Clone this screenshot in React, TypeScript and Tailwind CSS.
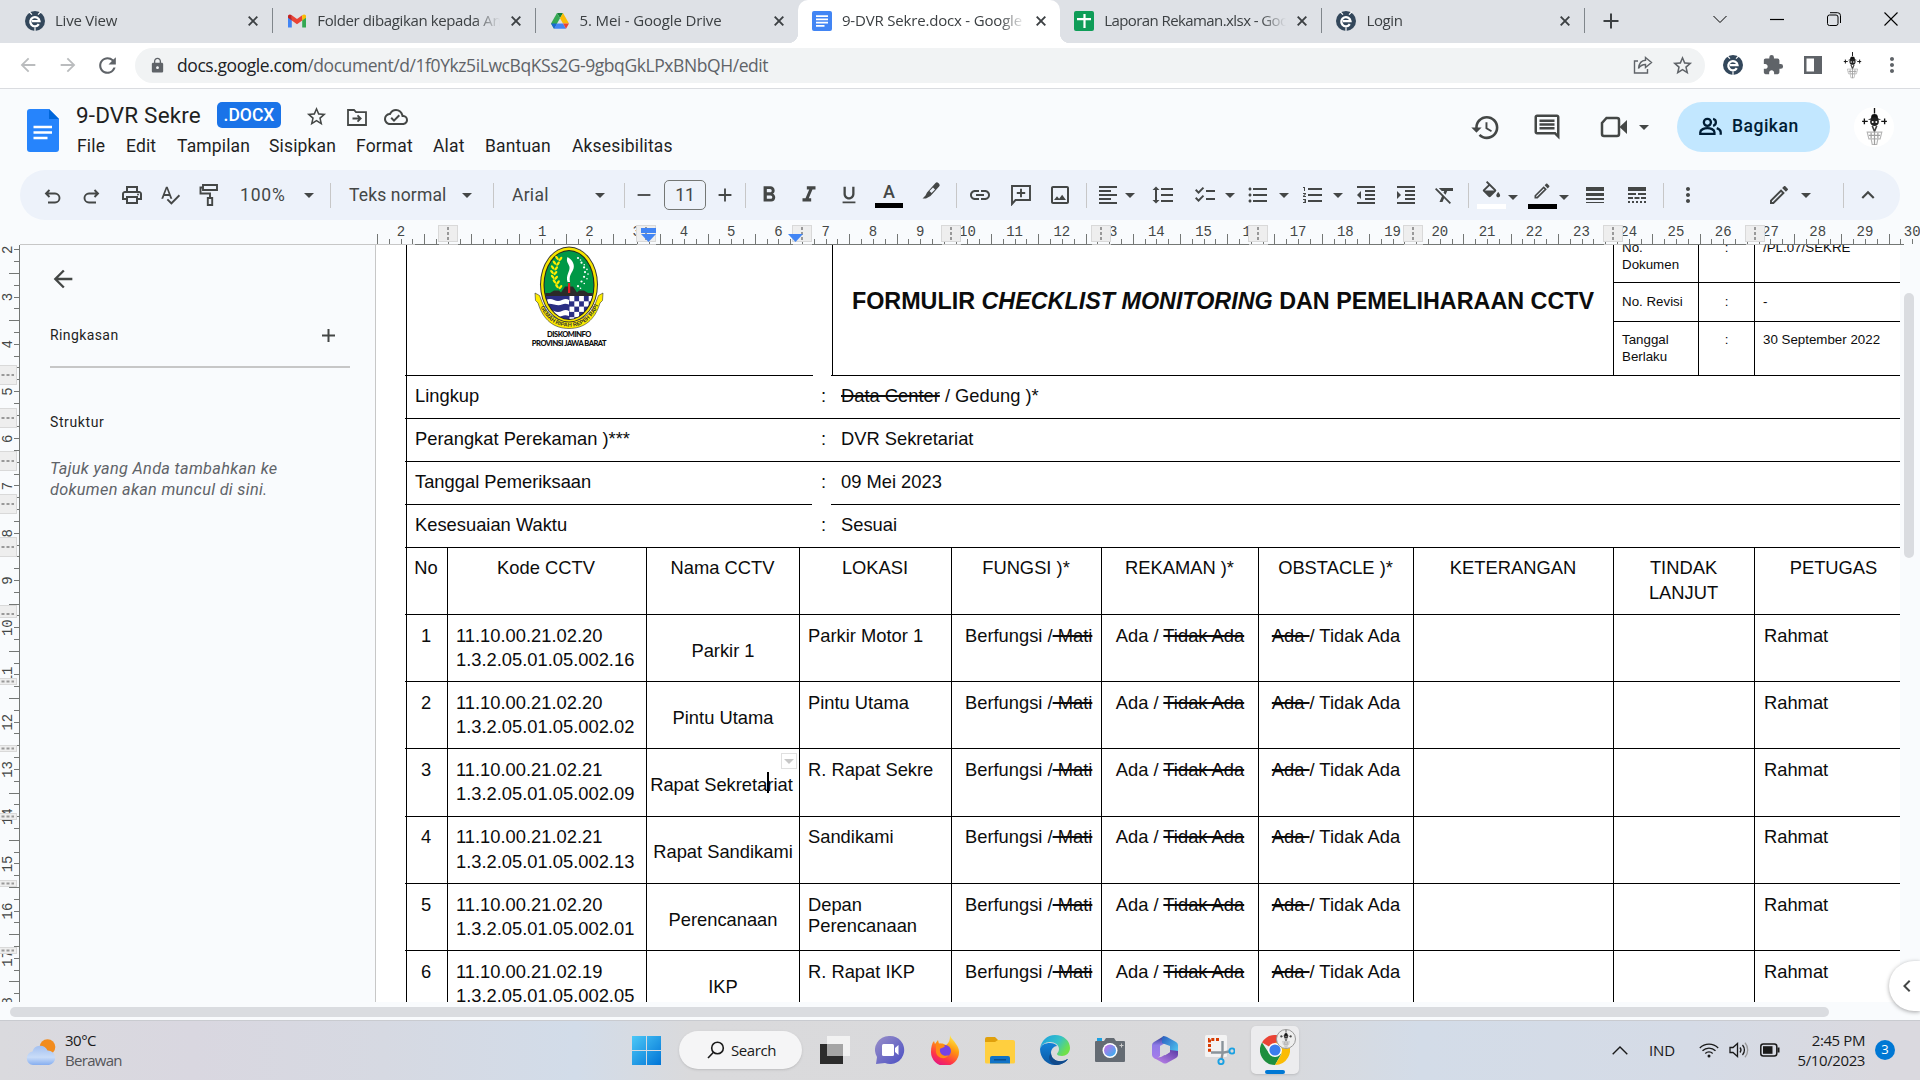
import React from "react";
import type { ReactNode } from "react";
import {
  MdOutlinePrint, MdSpellcheck, MdFormatBold, MdFormatItalic, MdFormatUnderlined,
  MdLink, MdOutlineImage, MdFormatAlignLeft, MdFormatLineSpacing, MdChecklist, MdFormatListBulleted,
  MdFormatListNumbered, MdFormatIndentDecrease, MdFormatIndentIncrease, MdFormatClear, MdFormatColorFill,
  MdLineWeight, MdLineStyle, MdMoreVert, MdOutlineEdit, MdExpandLess, MdHistory, MdOutlineComment,
  MdStarBorder, MdOutlineCloudDone, MdExtension, MdLock, MdArrowBack, MdArrowForward, MdRefresh, MdAdd,
  MdRemove, MdChevronLeft, MdPeopleOutline,
} from "react-icons/md";

/* ---------- small shared drawings ---------- */

function EyeLogo({ className = "" }: { className?: string }) {
  return (
    <svg viewBox="0 0 20 20" className={`h-5 w-5 shrink-0 ${className}`}>
      <circle cx="10" cy="10" r="10" fill="#33475b" />
      <path d="M4 .6L7 3.600M16 .6L13 3.600M10 20v-3.500" stroke="#fff" strokeWidth="1.200" />
      <path d="M13.800 13.200A4.600 4.600 0 1 1 14.500 10.200H7" fill="none" stroke="#fff" strokeWidth="2.300" />
    </svg>
  );
}

function GmailLogo() {
  return (
    <svg viewBox="0 0 20 20" className="h-5 w-5 shrink-0">
      <path d="M1 4.500v12h3.800V8L1 4.500z" fill="#4285f4" />
      <path d="M19 4.500v12h-3.800V8L19 4.500z" fill="#34a853" />
      <path d="M4.800 4.200v5.200L10 13.300l5.200-3.900V4.200L10 8.100z" fill="#ea4335" />
      <path d="M1 5.200v1.500l3.800 2.800V4.200C3 2.700 1 3.400 1 5.200z" fill="#c5221f" />
      <path d="M19 5.200v1.500l-3.800 2.800V4.200C17 2.700 19 3.400 19 5.200z" fill="#fbbc04" />
    </svg>
  );
}

function DriveLogo() {
  return (
    <svg viewBox="0 0 20 20" className="h-5 w-5 shrink-0">
      <path d="M7 2h6L10 7.200z" fill="#188038" />
      <path d="M7 2L1 12.500l3 5.200L10 7.200z" fill="#34a853" />
      <path d="M13 2l6 10.500h-6L10 7.200z" fill="#fbbc04" />
      <path d="M7 12.500h6l3 5.200H4z" fill="#4285f4" />
      <path d="M13 12.500h6l-3 5.200z" fill="#ea4335" />
      <path d="M7 12.500l-3 5.200-3-5.200z" fill="#1967d2" />
    </svg>
  );
}

function DocsTabLogo() {
  return (
    <svg viewBox="0 0 20 20" className="h-5 w-5 shrink-0">
      <rect width="20" height="20" rx="2" fill="#4285f4" />
      <path d="M4 5.200h12M4 8.400h12M4 11.600h12M4 14.800h8.500" stroke="#fff" strokeWidth="1.700" />
    </svg>
  );
}

function SheetsLogo() {
  return (
    <svg viewBox="0 0 20 20" className="h-5 w-5 shrink-0">
      <rect width="20" height="20" rx="2" fill="#0f9d58" />
      <path d="M3 8.200h14M10.500 3v14" stroke="#fff" strokeWidth="2.200" />
    </svg>
  );
}

function Pirate({ className = "" }: { className?: string }) {
  return (
    <svg viewBox="0 0 24 34" className={`shrink-0 ${className}`}>
      <path d="M12 0v5M1 12h5M18 12h5M3 9.500v5M21 9.500v5" stroke="#111" strokeWidth="1.200" />
      <path d="M6 10.500Q12 7 18 10.500z" fill="#111" />
      <circle cx="12" cy="8.500" r="3" fill="#111" />
      <circle cx="12" cy="12.300" r="3.900" fill="#222" />
      <circle cx="10.400" cy="12.600" r=".9" fill="#fff" />
      <circle cx="13.600" cy="12.600" r=".9" fill="#fff" />
      <path d="M10 16l2 5 2-5" stroke="#444" strokeWidth="1.400" fill="none" />
      <path d="M5.500 21.500h13l-1.500 6h-10zM9 27.500h6l-1 5h-4z" fill="none" stroke="#b5b5b5" strokeWidth="1" />
      <path d="M7 24.500h10M9 22v5M12 22v11M15 22v5" stroke="#a0a0a0" strokeWidth="1.100" />
    </svg>
  );
}

function Caret({ className = "" }: { className?: string }) {
  return (
    <span className={`flex w-3 shrink-0 justify-center ${className}`}>
      <svg viewBox="0 0 10 5" className="h-[5px] w-[10px]">
        <path d="M0 0h10L5 5z" fill="#444746" />
      </svg>
    </span>
  );
}

/* ---------- browser chrome ---------- */

type TabInfo = { icon: ReactNode; title: string; tracking: string; active?: boolean; line?: boolean };

const tabs: TabInfo[] = [
  { icon: <EyeLogo />, title: "Live View", tracking: "tracking-[-0.24px]", line: true },
  { icon: <GmailLogo />, title: "Folder dibagikan kepada An", tracking: "tracking-[-0.38px]", line: true },
  { icon: <DriveLogo />, title: "5. Mei - Google Drive", tracking: "tracking-[-0.13px]" },
  { icon: <DocsTabLogo />, title: "9-DVR Sekre.docx - Google", tracking: "tracking-[-0.18px]", active: true },
  { icon: <SheetsLogo />, title: "Laporan Rekaman.xlsx - Goo", tracking: "tracking-[-0.58px]", line: true },
  { icon: <EyeLogo />, title: "Login", tracking: "tracking-[-0.4px]", line: true },
];

function Tab({ t }: { t: TabInfo }) {
  return (
    <div
      className={`relative flex h-full w-[262.3px] shrink-0 items-center pb-[2px] pl-[14px] ${
        t.active ? "rounded-t-[10px] bg-white" : ""
      }`}
    >
      {t.active && (
        <>
          <span className="absolute bottom-0 -left-[10px] h-[10px] w-[10px] bg-[radial-gradient(circle_at_0_0,transparent_10px,#fff_10.5px)]" />
          <span className="absolute -right-[10px] bottom-0 h-[10px] w-[10px] bg-[radial-gradient(circle_at_100%_0,transparent_10px,#fff_10.5px)]" />
        </>
      )}
      {t.icon}
      <span
        className={`ml-[10px] w-[183px] overflow-hidden whitespace-nowrap [mask-image:linear-gradient(90deg,#000_86%,transparent_100%)] ${t.tracking}`}
      >
        {t.title}
      </span>
      <svg viewBox="0 0 10 10" className="ml-[11px] h-[10px] w-[10px] shrink-0">
        <path d="M.7.7l8.6 8.6M9.3.7L.7 9.3" stroke="#3c4043" strokeWidth="1.900" />
      </svg>
      {t.line && <span className="ml-[14px] h-[25px] w-px bg-[#80868b]" />}
    </div>
  );
}

function TabStrip() {
  return (
    <div className="flex h-[43px] items-center bg-[#dee1e6] pl-[11px] font-['Open_Sans',sans-serif] text-[15px] text-[#3c4043]">
      {tabs.map((t) => (
        <Tab key={t.title} t={t} />
      ))}
      <svg viewBox="0 0 16 16" className="mb-px ml-[18px] h-4 w-4">
        <path d="M8 .5v15M.5 8h15" stroke="#3c4043" strokeWidth="2" />
      </svg>
      <div className="ml-auto flex items-center gap-[43px] pr-[22px] pb-[6px] text-black">
        <svg viewBox="0 0 14 14" className="h-[14px] w-[14px]"><path d="M.5 4L7 10.500 13.500 4" fill="none" stroke="currentColor" /></svg>
        <svg viewBox="0 0 14 14" className="h-[14px] w-[14px]"><path d="M0 7.500h14" stroke="currentColor" strokeWidth="1.200" /></svg>
        <svg viewBox="0 0 14 14" className="h-[14px] w-[14px]" fill="none" stroke="currentColor"><rect x=".5" y="3" width="10.500" height="10.500" rx="2" /><path d="M3 .7h7.500a3 3 0 0 1 3 3V11" /></svg>
        <svg viewBox="0 0 14 14" className="h-[14px] w-[14px]"><path d="M.5.5l13 13M13.500.5l-13 13" stroke="currentColor" strokeWidth="1.100" /></svg>
      </div>
    </div>
  );
}

function AddressRow() {
  return (
    <div className="flex h-[46px] items-center border-b border-[#dadce0] bg-white pb-px pl-[17px]">
      <MdArrowBack className="h-[22px] w-[22px] text-[#babcbe]" />
      <MdArrowForward className="ml-[18px] h-[22px] w-[22px] text-[#babcbe]" />
      <MdRefresh className="ml-[16px] h-[25px] w-[25px] text-[#5f6368]" />
      <div className="ml-[15px] flex h-[35px] w-[1570px] shrink-0 items-center rounded-full bg-[#f1f3f4] pr-[11px] pl-[14px]">
        <MdLock className="h-[17px] w-[17px] text-[#5f6368]" />
        <span className="ml-[11px] font-['Open_Sans',sans-serif] text-[17.5px] tracking-[-0.42px] text-[#5f6368]">
          <span className="text-[#202124]">docs.google.com</span>/document/d/1f0Ykz5iLwcBqKSs2G-9gbqGkLPxBNbQH/edit
        </span>
        <svg viewBox="0 0 20 20" className="ml-auto h-5 w-5" fill="none" stroke="#5f6368" strokeWidth="1.400">
          <path d="M5 6H1.500v12h13v-4" />
          <path d="M12.500 2.500l6 5-6 5V9.500C9 9.500 7 11 5.500 13.500 6 9 8.500 5.500 12.500 5.300z" />
        </svg>
        <MdStarBorder className="ml-[18px] h-[23px] w-[23px] text-[#5f6368]" />
      </div>
      <EyeLogo className="ml-[18px]" />
      <MdExtension className="ml-[19px] h-[22px] w-[22px] text-[#5f6368]" />
      <svg viewBox="0 0 18 18" className="ml-[20px] h-[18px] w-[18px]"><path d="M0 0h18v18H0zM2.500 2.500v13h7.500v-13z" fill="#5f6368" fillRule="evenodd" /></svg>
      <Pirate className="ml-[21px] h-[27px] w-[19px]" />
      <MdMoreVert className="ml-[18px] h-[24px] w-[24px] text-[#5f6368]" />
    </div>
  );
}

/* ---------- document header ---------- */

const menus: [string, string][] = [
  ["File", "w-[49px]"],
  ["Edit", "w-[51px]"],
  ["Tampilan", "w-[92px]"],
  ["Sisipkan", "w-[87px]"],
  ["Format", "w-[77px]"],
  ["Alat", "w-[52px]"],
  ["Bantuan", "w-[87px]"],
  ["Aksesibilitas", "w-[110px]"],
];

function DocHeader() {
  return (
    <div className="flex h-[81px] text-[#1f1f1f]">
      <svg viewBox="0 0 32 43" className="mt-5 ml-[27px] h-[43px] w-8 shrink-0">
        <path d="M3 0h19l10 10v30a3 3 0 0 1-3 3H3a3 3 0 0 1-3-3V3a3 3 0 0 1 3-3z" fill="#2684fc" />
        <path d="M22 0l10 10H22z" fill="#0066da" />
        <path d="M6.500 18h18.500M6.500 23.500h18.500M6.500 29h14" stroke="#fff" strokeWidth="2.300" />
      </svg>
      <div className="ml-[18px] pt-[12px]">
        <div className="flex h-[28px] items-center">
          <span className="w-[140px] pt-[2px] -ml-px mr-px text-[22.5px] tracking-[0.16px]">9-DVR Sekre</span>
          <span className="flex h-[26px] w-[64px] items-center justify-center rounded-[5px] bg-[#1a73e8] text-[17.5px] font-medium text-white">
            .DOCX
          </span>
          <MdStarBorder className="mt-[3px] ml-[24px] h-[23px] w-[23px] text-[#444746]" />
          <svg viewBox="0 0 20 17" className="mt-[4px] ml-[19px] h-[17px] w-5" fill="none" stroke="#444746" strokeWidth="1.800">
            <path d="M1 1h6l2 2.200h10V16H1z" />
            <path d="M5.500 9.500h8M10.500 6.300l3.200 3.200-3.200 3.200" />
          </svg>
          <MdOutlineCloudDone className="mt-[4px] ml-[17px] h-[24px] w-[24px] text-[#444746]" />
        </div>
        <div className="flex pt-[5px] text-[17.5px] leading-[24px] tracking-[0.15px]">
          {menus.map(([m, w]) => (
            <span key={m} className={w}>{m}</span>
          ))}
        </div>
      </div>
      <div className="ml-auto flex h-[76px] items-center pr-[26px] text-[#444746]">
        <MdHistory className="h-[31px] w-[31px]" />
        <MdOutlineComment className="ml-[31px] h-[30px] w-[30px]" />
        <svg viewBox="0 0 28 22" className="ml-[38px] h-[22px] w-7">
          <path d="M6.500 2H17a2 2 0 0 1 2 2v14a2 2 0 0 1-2 2H4a2 2 0 0 1-2-2V7z" fill="none" stroke="#444746" strokeWidth="2.500" />
          <path d="M19.500 11L27 4v14z" fill="#444746" />
        </svg>
        <Caret className="ml-[10px]" />
        <div className="ml-[27px] flex h-[50px] w-[153px] items-center rounded-full bg-[#c2e7ff] pb-px pl-[21px] text-[17.5px] tracking-[0.5px] text-[#001d35]">
          <svg viewBox="0 0 24 24" className="h-[25px] w-[25px]" fill="none" stroke="currentColor" strokeWidth="2.200">
            <circle cx="9" cy="8" r="3.400" />
            <path d="M2.200 19v-1.500c0-2.600 4-4 6.800-4s6.800 1.400 6.800 4V19z" />
            <path d="M14.500 4.600a3.500 3.500 0 0 1 0 6.800M18 13.500c2.200.8 3.800 2.200 3.800 4V20" />
          </svg>
          <span className="ml-[9px] font-medium">Bagikan</span>
        </div>
        <span className="ml-[24px] flex h-10 w-10 items-center justify-center rounded-full bg-white">
          <Pirate className="h-[40px] w-[27px]" />
        </span>
      </div>
    </div>
  );
}

function Rule({ className }: { className: string }) {
  return <span className={`h-[25px] w-px shrink-0 bg-[#c7c7c7] ${className}`} />;
}

function Toolbar() {
  const ic = "h-[22px] w-[22px] shrink-0";
  return (
    <div className="mx-5 flex h-[50px] w-[1880px] items-center rounded-full bg-[#edf2fa] text-[17.5px] text-[#444746]">
      <svg viewBox="0 0 22 22" className={`mt-[3px] ml-[22px] ${ic}`} fill="none" stroke="currentColor" strokeWidth="1.900"><path d="M7.500 4L4 7.500 7.500 11M4.500 7.500H13a4.500 4.500 0 0 1 0 9H6" /></svg>
      <svg viewBox="0 0 22 22" className={`mt-[3px] ml-[16px] ${ic}`} fill="none" stroke="currentColor" strokeWidth="1.900"><path d="M14.500 4L18 7.500 14.500 11M17.500 7.500H9a4.500 4.500 0 0 0 0 9h7" /></svg>
      <MdOutlinePrint className="ml-[18px] h-6 w-6 shrink-0" />
      <MdSpellcheck className={`ml-[15px] ${ic}`} />
      <svg viewBox="0 0 22 22" className={`ml-[17px] ${ic}`} fill="none" stroke="currentColor" strokeWidth="1.900">
        <path d="M5 1h14v5H5zM5 3.500H2.500V9.500H12v4" />
        <path d="M9.800 14h4.400v7H9.800z" />
      </svg>
      <span className="ml-[20px] w-[47px] shrink-0 tracking-[0.8px]">100%</span>
      <Caret className="ml-[16px]" />
      <Rule className="ml-[15px]" />
      <span className="ml-[18px] w-[98px] shrink-0 whitespace-nowrap tracking-[0.15px]">Teks normal</span>
      <Caret className="ml-[14px]" />
      <Rule className="ml-[20px]" />
      <span className="ml-[18px] w-[40px] shrink-0 tracking-[0.26px]">Arial</span>
      <Caret className="ml-[42px]" />
      <Rule className="ml-[18px]" />
      <MdRemove className={`ml-[8px] ${ic}`} />
      <span className="ml-[9px] flex h-[30px] w-[42px] shrink-0 items-center justify-center rounded-[5px] border border-[#747775]">11</span>
      <MdAdd className={`ml-[8px] ${ic}`} />
      <Rule className="ml-[9px]" />
      <MdFormatBold className="ml-[10px] h-[26px] w-[26px] shrink-0" />
      <MdFormatItalic className="ml-[14px] h-[26px] w-[26px] shrink-0" />
      <MdFormatUnderlined className={`ml-[16px] ${ic}`} />
      <span className="ml-[15px] flex w-[28px] shrink-0 flex-col items-center">
        <span className="h-[20px] text-[18px] leading-[20px] font-medium">A</span>
        <span className="mt-[1px] h-[5px] w-[28px] bg-black" />
      </span>
      <svg viewBox="0 0 22 22" className={`mb-[8px] ml-[17px] ${ic}`}>
        <path d="M7 12.500L15.500 3a2 2 0 0 1 2.800 0l.8.8a2 2 0 0 1 0 2.800L10.500 16 6 18.500H2.500l3-3z" fill="currentColor" />
        <path d="M9.500 11l2 2 3.500-3.500-2-2z" fill="#edf2fa" />
      </svg>
      <Rule className="ml-[14px]" />
      <MdLink className="ml-[11px] h-6 w-6 shrink-0" />
      <svg viewBox="0 0 22 22" className={`ml-[18px] ${ic}`} fill="none" stroke="currentColor" strokeWidth="1.900">
        <path d="M2 20V2h18v14H5.500z" />
        <path d="M11 4.800v8.400M6.800 9h8.400" />
      </svg>
      <MdOutlineImage className="ml-[16px] h-6 w-6 shrink-0" />
      <Rule className="ml-[14px]" />
      <MdFormatAlignLeft className="ml-[9px] h-6 w-6 shrink-0" />
      <Caret className="ml-[4px]" />
      <MdFormatLineSpacing className="ml-[15px] h-6 w-6 shrink-0" />
      <MdChecklist className="ml-[18px] h-6 w-6 shrink-0" />
      <Caret className="ml-[7px]" />
      <MdFormatListBulleted className="ml-[10px] h-6 w-6 shrink-0" />
      <Caret className="ml-[8px]" />
      <MdFormatListNumbered className="ml-[11px] h-6 w-6 shrink-0" />
      <Caret className="ml-[7px]" />
      <MdFormatIndentDecrease className="ml-[10px] h-6 w-6 shrink-0" />
      <MdFormatIndentIncrease className="ml-[16px] h-6 w-6 shrink-0" />
      <MdFormatClear className="ml-[15px] h-6 w-6 shrink-0" />
      <Rule className="ml-[11px]" />
      <span className="ml-[7px] flex w-[30px] shrink-0 flex-col items-center">
        <MdFormatColorFill className="-mt-px h-[23px] w-[23px] [clip-path:inset(0_0_15%_0)]" />
        <span className="h-[5px] w-[29px] bg-white" />
      </span>
      <Caret className="mt-1 ml-[1px]" />
      <span className="ml-[8px] flex w-[30px] shrink-0 flex-col items-center">
        <MdOutlineEdit className="mb-[3px] h-[20px] w-[20px]" />
        <span className="h-[5px] w-[29px] bg-black" />
      </span>
      <Caret className="mt-1 ml-[1px]" />
      <MdLineWeight className="ml-[13px] h-6 w-6 shrink-0" />
      <MdLineStyle className="ml-[18px] h-6 w-6 shrink-0" />
      <Rule className="ml-[14px]" />
      <MdMoreVert className="ml-[12px] h-6 w-6 shrink-0" />
      <MdOutlineEdit className="ml-[67px] h-6 w-6 shrink-0" />
      <Caret className="ml-[9px]" />
      <Rule className="ml-[31px]" />
      <MdExpandLess className="ml-[11px] h-[26px] w-[26px] shrink-0" />
    </div>
  );
}

/* ---------- rulers ---------- */

const PITCH = 47.24;

function TopRuler() {
  const ticks: ReactNode[] = [];
  for (let q = -10; q <= 121; q++) {
    const x = Math.round(495 + (q * PITCH) / 4) + 0.5;
    if (x > 1918) break;
    const half = Math.abs(q % 4) === 2;
    ticks.push(<path key={q} d={`M${x} ${half ? 14 : 19}V24`} stroke="#747775" />);
  }
  const nums = [-2];
  for (let n = 1; n <= 30; n++) nums.push(n);
  const marks = [448, 646, 802, 951, 1101, 1258, 1413, 1613, 1755];
  return (
    <svg viewBox="0 0 1920 25" className="block h-[25px] w-[1920px]">
      <path d="M20 24.500H1900" stroke="#c7c7c7" />
      <path d="M415 24.500H1904" stroke="#747775" />
      {ticks}
      {nums.map((n) => (
        <text key={n} x={495 + n * PITCH + (n === -2 ? 0.5 : 0)} y="15.500" textAnchor="middle" fontSize="14" fontFamily="Liberation Mono, monospace" fill="#444746">
          {Math.abs(n)}
        </text>
      ))}
      {marks.map((m) => (
        <g key={m}>
          <path d={`M${m - 9} 24.500h19`} stroke="#c7c7c7" />
          <rect x={m - 9.5} y="5.500" width="19" height="16" fill="#eee" stroke="#d9d9d9" />
          <path d={`M${m} 7V20`} stroke="#999" strokeWidth="2" strokeDasharray="3 2" />
        </g>
      ))}
      <path d="M641 8h15v5h-15zM641 14h15l-7.500 8z" fill="#4285f4" />
      <path d="M788 14h15l-7.500 8z" fill="#4285f4" />
    </svg>
  );
}

function SideRuler() {
  const ticks: ReactNode[] = [];
  for (let q = 8; q <= 71; q++) {
    const y = Math.round(51.5 + ((q - 12) * PITCH) / 4) + 0.5;
    if (y < 2 || y > 757) continue;
    ticks.push(<path key={q} d={`M${q % 4 === 2 ? 9 : 14} ${y}H19`} stroke="#747775" />);
  }
  const nums: number[] = [];
  for (let n = 2; n <= 18; n++) nums.push(n);
  const marks: [number, number, number][] = [
    [120, 19, 10], [163, 19, 10], [206, 19, 10], [249, 19, 10], [292, 19, 10], [360, 12, 9],
    [433, 6, 3.5], [500, 6, 3.5], [568, 6, 3.5], [635, 6, 3.5], [702, 6, 3.5],
  ];
  return (
    <svg viewBox="0 0 20 757" className="block h-[757px] w-5 shrink-0">
      <path d="M19.500 0V757" stroke="#747775" />
      {ticks}
      {nums.map((n) => (
        <text key={n} transform={`translate(12 ${52 + (n - 3) * PITCH}) rotate(-90)`} textAnchor="middle" fontSize="14" fontFamily="Liberation Mono, monospace" fill="#444746">
          {n}
        </text>
      ))}
      {marks.map(([y, h, d]) => (
        <g key={y}>
          <rect x="-.5" y={y + 0.5} width="17" height={h} fill="#eee" stroke="#d9d9d9" />
          <path d={`M1.500 ${y + d}H14`} stroke="#999" strokeWidth="2" strokeDasharray="3 2" />
        </g>
      ))}
    </svg>
  );
}

/* ---------- outline panel ---------- */

function Outline() {
  return (
    <div className="w-[355px] shrink-0 pl-[30px] text-[#1f1f1f]">
      <MdArrowBack className="mt-[20px] -ml-[1px] h-[28px] w-[28px] text-[#444746]" />
      <div className="mt-[32px] flex w-[300px] items-center justify-between pr-[15px] text-[14px] leading-[20px] tracking-[0.4px]">
        <span className="text-[#1f1f1f]">Ringkasan</span>
        <svg viewBox="0 0 13 13" className="h-[13px] w-[13px]"><path d="M6.500 0v13M0 6.500h13" stroke="#444746" strokeWidth="2" /></svg>
      </div>
      <div className="mt-[21px] h-[2px] w-[300px] bg-[#c7c7c7]" />
      <div className="mt-[44px] text-[14px] leading-[20px] tracking-[0.6px] text-[#1f1f1f]">Struktur</div>
      <div className="mt-[26px] w-[240px] text-[16.25px] leading-[21px] tracking-[0.32px] whitespace-nowrap text-[#5f6368] italic">
        Tajuk yang Anda tambahkan ke
        <br />
        dokumen akan muncul di sini.
      </div>
    </div>
  );
}

/* ---------- document ---------- */

function Crest() {
  const checks: ReactNode[] = [];
  for (let r = 0; r < 5; r++)
    for (let c = 0; c < 5; c++)
      if ((r + c) % 2 === 0) checks.push(<rect key={`${r}${c}`} x={35.5 + c * 4.8} y={50 + r * 5.3} width="4.800" height="5.300" fill="#fff" />);
  const leaves = [0, 1, 2, 3, 4, 5, 6];
  return (
    <svg viewBox="0 0 70 83" className="mt-px h-[83px] w-[70px]">
      <defs>
        <clipPath id="oval"><ellipse cx="35" cy="39" rx="24.500" ry="34" /></clipPath>
        <path id="ribbon" d="M6 60C13 74.500 22 80.600 35 80.600S57 74.500 64 60" />
      </defs>
      <path d="M1 47L5.500 49.500 8 56C13 69 22 75 35 75S57 69 62 56L64.500 49.500 69 47 68.500 54.500 66 57C61 74 50 82.500 35 82.500S9 74 4 57L1.500 54.500z" fill="#ffed00" stroke="#333" strokeWidth=".6" />
      <ellipse cx="35" cy="38.500" rx="29" ry="38" fill="#333" />
      <ellipse cx="35" cy="38.500" rx="28" ry="37" fill="#f5e400" />
      <ellipse cx="35" cy="39" rx="25.500" ry="35" fill="#222" />
      <g clipPath="url(#oval)">
        <rect x="8" y="3" width="54" height="48" fill="#009846" />
        <path d="M8 51V47h8l4-2.500h5l2 2 4-6h8l4 6 2-2h5l4 2.500h8v4z" fill="#2b2a29" />
        <rect x="8" y="50" width="54" height="28" fill="#2b2e83" />
        {checks}
        <path d="M12 54q4-2 8 0t8 0 7 0v4.500q-4-1.500-7 0t-8 0-8 0zM12 65q4-2 8 0t8 0 7 0v5q-4-1.500-7 0t-8 0-8 0z" fill="#fff" />
      </g>
      <path d="M33.500 11c5 3 8 8 5.500 13-2 4-4 6-3 12h-2.500c-2-7 2.500-10 2-15-.3-3-4-5-2-10z" fill="#fff" />
      <rect x="34" y="37" width="2.200" height="10" fill="#e31e24" />
      {leaves.map((i) => {
        const bend = Math.sin((i / 6) * Math.PI);
        const y = 12 + i * 4.7;
        return (
          <g key={i}>
            <ellipse cx={23 - bend * 5} cy={y} rx="2.500" ry="1.200" transform={`rotate(50 ${23 - bend * 5} ${y})`} fill="#ffed00" />
            <ellipse cx={26.5 - bend * 5} cy={y + 1} rx="2.500" ry="1.200" transform={`rotate(-50 ${26.5 - bend * 5} ${y + 1})`} fill="#ffed00" />
            <circle cx={44 + bend * 7} cy={y} r="1.100" fill="#fff" />
            <circle cx={46.5 + bend * 7.5} cy={y + 2} r=".8" fill="#fff" />
          </g>
        );
      })}
      <text fontSize="5.600" fontWeight="700" fontFamily="Liberation Sans, sans-serif" fill="#333">
        <textPath href="#ribbon" startOffset="1">GEMAH RIPAH REPEH RAPIH</textPath>
      </text>
    </svg>
  );
}

const infoRows: [string, ReactNode, string][] = [
  ["Lingkup", <><s className="decoration-2">Data Center</s> / Gedung )*</>, "w-[408px]"],
  ["Perangkat Perekaman )***", "DVR Sekretariat", "w-[427px]"],
  ["Tanggal Pemeriksaan", "09 Mei 2023", "w-[427px]"],
  ["Kesesuaian Waktu", "Sesuai", "w-[407px]"],
];

const camRows: [string, string, string, string, string, string][] = [
  ["1", "11.10.00.21.02.20", "1.3.2.05.01.05.002.16", "Parkir 1", "Parkir Motor 1", "h-[67px]"],
  ["2", "11.10.00.21.02.20", "1.3.2.05.01.05.002.02", "Pintu Utama", "Pintu Utama", "h-[67px]"],
  ["3", "11.10.00.21.02.21", "1.3.2.05.01.05.002.09", "Rapat Sekretariat", "R. Rapat Sekre", "h-[68px]"],
  ["4", "11.10.00.21.02.21", "1.3.2.05.01.05.002.13", "Rapat Sandikami", "Sandikami", "h-[67px]"],
  ["5", "11.10.00.21.02.20", "1.3.2.05.01.05.002.01", "Perencanaan", "Depan Perencanaan", "h-[67px]"],
  ["6", "11.10.00.21.02.19", "1.3.2.05.01.05.002.05", "IKP", "R. Rapat IKP", "h-[67px]"],
];

const cols = "ml-px grid grid-cols-[41px_199px_153px_152px_150px_157px_155px_200px_141px_145px]";
const cell = "border-l border-black";

function HeadCell({ children, className = "pr-[1px]" }: { children?: ReactNode; className?: string }) {
  return <div className={`${cell} pt-[7px] text-center leading-[25px] ${className}`}>{children}</div>;
}

function CamRow({ row }: { row: (typeof camRows)[number] }) {
  const [no, a, b, nama, lokasi, h] = row;
  const up = no === "4" ? "-mt-px" : "";
  return (
    <div className={`border-t border-black ${h}`}>
      <div className={`${cols} h-full`}>
        <div className={`${cell} pt-[9px] pr-[2px] text-center`}><div className={up}>{no}</div></div>
        <div className={`${cell} pt-[9px] pl-[8px]`}><div className={up}>{a}</div><div className={up ? "mt-px" : ""}>{b}</div></div>
        <div className={`${cell} relative pt-[24px] text-center whitespace-nowrap`}>
          {no === "3" ? (
            <>
              <span className="-ml-[3px]">Rapat Sekreta</span>
              <span className="relative"><span className="absolute -top-[2px] left-0 h-[21px] w-[1.5px] bg-black" />riat</span>
              <span className="absolute top-[4px] right-[2px] flex h-[16px] w-[16px] items-center justify-center border border-[#e0e0e0] bg-white">
                <svg viewBox="0 0 10 5" className="h-[5px] w-[10px]"><path d="M0 0h10L5 5z" fill="#c7c7c7" /></svg>
              </span>
            </>
          ) : (
            <div className={up}>{nama}</div>
          )}
        </div>
        <div className={`${cell} pt-[10px] pl-[8px] leading-[21px]`}><div className={`${up} w-[130px]`}>{lokasi}</div></div>
        <div className={`${cell} pt-[9px] pl-[13px] whitespace-nowrap`}><div className={up}>Berfungsi /<s className="decoration-2"> Mati</s></div></div>
        <div className={`${cell} pt-[9px] text-center whitespace-nowrap`}><div className={up}>Ada / <s className="decoration-2">Tidak Ada</s></div></div>
        <div className={`${cell} pt-[9px] text-center whitespace-nowrap`}><div className={up}><s className="decoration-2">Ada </s>/ Tidak Ada</div></div>
        <div className={cell} />
        <div className={cell} />
        <div className={`${cell} pt-[9px] pl-[9px]`}><div className={up}>Rahmat</div></div>
      </div>
    </div>
  );
}

function MetaRow({ label, value, className }: { label: ReactNode; value: string; className: string }) {
  return (
    <div className={`grid grid-cols-[84px_56px_1fr] text-[13.33px] leading-[17px] ${className}`}>
      <div className="pl-[8px]">{label}</div>
      <div className="border-l border-black text-center">:</div>
      <div className="border-l border-black pl-[8px] whitespace-nowrap">{value}</div>
    </div>
  );
}

function DocumentPage() {
  return (
    <div className="w-[1525px] shrink-0 overflow-hidden border-l border-[#c7c7c7] bg-white pl-[29px] font-['Liberation_Sans',Arial,sans-serif] text-[18.33px] leading-[24px] text-[#0c0c0c]">
      <div className="ml-px flex h-[130px]">
        <div className="flex w-[426px] flex-col items-center border-l border-black pr-[101px]">
          <Crest />
          <div className="mt-[2px] text-center font-['Lato',sans-serif] text-[7.5px] leading-[8.5px] font-black tracking-[-0.48px] whitespace-nowrap">
            DISKOMINFO
            <br />
            PROVINSI JAWA BARAT
          </div>
        </div>
        <div className="flex w-[781px] items-center justify-center border-l border-black pb-[18px] text-[23.33px] font-bold whitespace-nowrap">
          <span>
            FORMULIR <i>CHECKLIST MONITORING</i> DAN PEMELIHARAAN CCTV
          </span>
        </div>
        <div className="flex-1 border-l border-black">
          <div className="h-[37px] overflow-hidden">
            <MetaRow label={<>No.<br />Dokumen</>} value="/PL.07/SEKRE" className="-mt-[6px] h-[43px]" />
          </div>
          <MetaRow label="No. Revisi" value="-" className="h-[39px] border-t border-black *:pt-[10px]" />
          <MetaRow label={<>Tanggal<br />Berlaku</>} value="30 September 2022" className="h-[54px] border-t border-black *:pt-[9px]" />
        </div>
      </div>
      {infoRows.map(([label, value, w]) => (
        <div key={label} className="relative flex h-[43px] items-center">
          <span className={`absolute top-0 left-0 h-px bg-black ${w}`} />
          <span className="absolute top-0 right-0 left-[426px] h-px bg-black" />
          <div className="ml-px flex h-full w-[407px] items-center border-l border-black pb-[2px] pl-[8px]">{label}</div>
          <span className="ml-[8px] w-[20px] pb-[2px]">:</span>
          <span className="pb-[2px]">{value}</span>
        </div>
      ))}
      <div className="h-[67px] border-t border-black">
        <div className={`${cols} h-full`}>
          <HeadCell className="pr-[2px]">No</HeadCell>
          <HeadCell className="pr-[2px]">Kode CCTV</HeadCell>
          <HeadCell>Nama CCTV</HeadCell>
          <HeadCell>LOKASI</HeadCell>
          <HeadCell>FUNGSI )*</HeadCell>
          <HeadCell>REKAMAN )*</HeadCell>
          <HeadCell>OBSTACLE )*</HeadCell>
          <HeadCell>KETERANGAN</HeadCell>
          <HeadCell>TINDAK<br />LANJUT</HeadCell>
          <HeadCell className="pl-[13px]">PETUGAS</HeadCell>
        </div>
      </div>
      {camRows.map((r) => (
        <CamRow key={r[0]} row={r} />
      ))}
    </div>
  );
}

/* ---------- taskbar ---------- */

function TaskIcons() {
  const s = "h-[30px] w-[30px] shrink-0";
  return (
    <div className="flex items-center">
      <svg viewBox="0 0 29 29" className="h-[29px] w-[29px]">
        <defs><linearGradient id="win" x1="0" y1="0" x2="1" y2="1"><stop offset="0" stopColor="#4cc8f7" /><stop offset="1" stopColor="#0074d6" /></linearGradient></defs>
        <path d="M0 0h14v14H0zM15 0h14v14H15zM0 15h14v14H0zM15 15h14v14H15z" fill="url(#win)" />
      </svg>
      <div className="ml-[18px] flex h-[38px] w-[123px] items-center rounded-full bg-[#f5f5f6] pl-[28px] text-[15px] tracking-[-0.4px] text-[#1a1a1a] shadow-sm">
        <svg viewBox="0 0 18 18" className="h-[18px] w-[18px]" fill="none" stroke="#1a1a1a" strokeWidth="1.600"><circle cx="10.500" cy="7" r="5.800" /><path d="M6.500 11.200L1 17" /></svg>
        <span className="ml-[6px]">Search</span>
      </div>
      <svg viewBox="0 0 30 30" className={`ml-[18px] ${s}`}>
        <rect y="9" width="23" height="20" fill="#2c2c2c" />
        <rect x="7" y="1" width="23" height="20" fill="#f4f4f4" opacity=".9" />
        <rect x="7" y="9" width="16" height="12" fill="#a5a5a5" />
      </svg>
      <svg viewBox="0 0 30 30" className={`ml-[25px] ${s}`}>
        <defs><linearGradient id="chat" x1="0" y1="0" x2="1" y2="1"><stop offset="0" stopColor="#9a90c8" /><stop offset="1" stopColor="#4b4fc4" /></linearGradient></defs>
        <path d="M15 1a14 14 0 1 1-5 27L1 29l1-7A14 14 0 0 1 15 1z" fill="url(#chat)" />
        <rect x="7" y="9" width="12" height="12" rx="1.500" fill="#fff" />
        <path d="M20 13l3.500-3v10L20 17z" fill="#fff" />
      </svg>
      <svg viewBox="0 0 30 30" className={`ml-[25px] ${s}`}>
        <defs>
          <linearGradient id="ff" x1=".8" y1="0" x2=".3" y2="1"><stop offset="0" stopColor="#fff44f" /><stop offset=".4" stopColor="#ff980e" /><stop offset=".75" stopColor="#ff3647" /><stop offset="1" stopColor="#e31587" /></linearGradient>
        </defs>
        <path d="M20 0c1 4 4 5 6 9 2 3 3 5 3 8a14 14 0 0 1-28 0c0-5 1-9 3-11l1 3 3-4 1 4c3-1 5 0 7 1 3-2 4-5 4-10z" fill="url(#ff)" />
        <circle cx="15" cy="16" r="6" fill="#7542e5" />
        <path d="M6 9c4-1 7 0 9 2-1 2-5 2-5 3-1 6 5 8 9 6-3 5-12 4-13-3z" fill="#ff8a16" />
      </svg>
      <svg viewBox="0 0 30 30" className={`ml-[25px] ${s}`}>
        <path d="M0 4a2 2 0 0 1 2-2h8l3 3v6H0z" fill="#e0a00c" />
        <path d="M0 7h10l3-2h15a2 2 0 0 1 2 2v20a1.500 1.500 0 0 1-1.500 1.500h-27A1.500 1.500 0 0 1 0 27z" fill="#ffcf3f" />
        <path d="M5 28.500V23a2 2 0 0 1 2-2h16a2 2 0 0 1 2 2v5.500z" fill="#1173c7" />
        <path d="M9 24.800h12" stroke="#0b4a84" strokeWidth="1.300" />
      </svg>
      <svg viewBox="0 0 30 30" className={`ml-[25px] ${s}`}>
        <defs>
          <linearGradient id="ed" x1="0" y1="0" x2="1" y2=".5"><stop offset="0" stopColor="#1b9de2" /><stop offset=".6" stopColor="#35c1c8" /><stop offset="1" stopColor="#6fe04b" /></linearGradient>
          <linearGradient id="ed2" x1="0" y1="0" x2="0" y2="1"><stop offset="0" stopColor="#1481d8" /><stop offset="1" stopColor="#0c59a4" /></linearGradient>
        </defs>
        <path d="M0 14C1 6 7 0 15 0c9 0 15 6 15 13 0 5-4 8-8 8-3 0-5-1-5-2s2-2 2-5c0-4-4-7-9-7S1 10 0 14z" fill="url(#ed)" />
        <path d="M0 14c1-4 5-6 10-6 3 0 6 1 7 3-3 0-6 3-6 7 0 6 6 9 11 8 3 0 5-2 6-2-3 4-8 6-13 6C7 30 0 23 0 14z" fill="url(#ed2)" />
        <path d="M11 18c0 6 6 9 11 8 3 0 5-2 6-2-3 4-8 6-13 6-5-2-8-7-4-12z" fill="#114a8b" />
      </svg>
      <svg viewBox="0 0 30 30" className={`ml-[25px] ${s}`}>
        <defs><linearGradient id="lens" x1="0" y1="0" x2="1" y2="1"><stop offset="0" stopColor="#d06ae8" /><stop offset="1" stopColor="#2ab7f0" /></linearGradient></defs>
        <rect x="2" y="3" width="5" height="4" fill="#1ba1e2" />
        <path d="M1 6h8l2-3h8l2 3h8a1 1 0 0 1 1 1v19a1 1 0 0 1-1 1H1a1 1 0 0 1-1-1V7a1 1 0 0 1 1-1z" fill="#646b73" />
        <circle cx="15" cy="15.500" r="7.500" fill="#fff" />
        <circle cx="15" cy="15.500" r="6" fill="url(#lens)" />
        <path d="M26.500 8.500v4M24.500 10.500h4" stroke="#ccc" strokeWidth="1" />
      </svg>
      <svg viewBox="0 0 30 30" className={`ml-[25px] ${s}`}>
        <defs>
          <linearGradient id="ma" x1="0" y1="0" x2="0" y2="1"><stop offset="0" stopColor="#2b3a8c" /><stop offset=".4" stopColor="#8f7ae8" /><stop offset="1" stopColor="#a57bea" /></linearGradient>
          <linearGradient id="mb" x1="0" y1="0" x2="1" y2="1"><stop offset="0" stopColor="#2a5fc0" /><stop offset="1" stopColor="#55d0f5" /></linearGradient>
          <linearGradient id="mc" x1="0" y1="1" x2="1" y2="0"><stop offset="0" stopColor="#c58af0" /><stop offset="1" stopColor="#5a3ba5" /></linearGradient>
        </defs>
        <path d="M14 1L4 7a4 4 0 0 0-2 3v10a4 4 0 0 0 2 3l2 1 4-3V11l7-4z" fill="url(#ma)" />
        <path d="M12 2a5 5 0 0 1 5 0l9 5a4 4 0 0 1 2 3v10l-8-4v-5l-8-3z" fill="url(#mb)" />
        <path d="M4 23l9 5a4 4 0 0 0 4 0l9-5a4 4 0 0 0 2-3v-4l-8-1v2l-9 5z" fill="url(#mc)" />
        <path d="M15 10l4.500 2.600v5L15 20.200l-4.500-2.600v-5z" fill="#d9dadc" />
      </svg>
      <svg viewBox="0 0 30 30" className={`ml-[25px] ${s}`}>
        <rect width="22" height="22" rx="1.500" fill="#f3f3f3" />
        <path d="M14 4.500H4.500V17" fill="none" stroke="#d83b01" strokeWidth="3" strokeDasharray="3 1.700" />
        <path d="M17.500 6v13l-1 5M6 17.500h13l5-1" stroke="#8a949b" strokeWidth="2.400" fill="none" />
        <circle cx="16" cy="26.500" r="2.600" fill="none" stroke="#1ba1e2" strokeWidth="1.900" />
        <circle cx="27" cy="16" r="2.600" fill="none" stroke="#1ba1e2" strokeWidth="1.900" />
      </svg>
      <div className="relative ml-[16px] flex h-12 w-12 items-center justify-center rounded-[5px] bg-[#ececee] shadow-sm">
        <svg viewBox="0 0 30 30" className={s}>
          <path d="M15 15L2 7.500a15 15 0 0 1 26 0z" fill="#ea4335" />
          <path d="M2 7.500a15 15 0 0 0 13 22.500l6.500-11.500-13-1z" fill="#1e8e3e" />
          <path d="M28 7.500H15l6.500 11.500L15 30A15 15 0 0 0 28 7.500z" fill="#fbbc04" />
          <circle cx="15" cy="15" r="7" fill="#fff" />
          <circle cx="15" cy="15" r="5.600" fill="#3b7ded" />
        </svg>
        <span className="absolute top-[3px] right-[3px] flex h-5 w-5 items-center justify-center rounded-full border border-[#999] bg-[#eee]">
          <Pirate className="h-[18px] w-[14px]" />
        </span>
        <span className="absolute bottom-0 h-1 w-5 rounded-full bg-[#0078d4]" />
      </div>
    </div>
  );
}

function Taskbar() {
  return (
    <div className="flex h-[60px] items-center border-t border-[#c9cbd0] bg-[linear-gradient(90deg,#dadade_0,#d9d7e0_10%,#d6d9e2_20%,#d2dce9_30%,#dadadc_36%,#d9d9db_66%,#d3dce8_74%,#d5dbe6_88%,#dad9df_98%)] pb-px font-['Open_Sans',sans-serif] text-[15px] text-[#1a1a1a]">
      <div className="flex w-[632px] items-center pl-[26px]">
        <svg viewBox="0 0 30 26" className="mt-[3px] h-[26px] w-[30px]">
          <defs><linearGradient id="cl" x1="0" y1="0" x2="0" y2="1"><stop offset="0" stopColor="#a3c0f0" /><stop offset=".6" stopColor="#c9dcf8" /><stop offset="1" stopColor="#86aef0" /></linearGradient></defs>
          <circle cx="21.500" cy="8" r="7.800" fill="#f28c1e" />
          <path d="M7 26a6.800 6.800 0 0 1-.5-13.500 8 8 0 0 1 15-1A7.300 7.300 0 0 1 23 26z" fill="url(#cl)" />
        </svg>
        <div className="ml-[9px] pb-px leading-[20px]">
          <div className="tracking-[-0.5px]">30°C</div>
          <div className="tracking-[-0.7px] text-[#55565a]">Berawan</div>
        </div>
      </div>
      <TaskIcons />
      <div className="ml-auto flex items-center pr-[25px]">
        <svg viewBox="0 0 16 9" className="h-[9px] w-4"><path d="M.7 8.300L8 1l7.300 7.300" fill="none" stroke="#1a1a1a" strokeWidth="1.400" /></svg>
        <span className="ml-[21px] w-[26px] tracking-[-0.1px]">IND</span>
        <svg viewBox="0 0 20 16" className="ml-[24px] h-4 w-5" fill="none" stroke="#1a1a1a" strokeWidth="1.300">
          <path d="M.8 6a13 13 0 0 1 18.400 0M3.500 8.800a9.200 9.200 0 0 1 13 0M6.300 11.500a5.200 5.200 0 0 1 7.400 0" />
          <circle cx="10" cy="14" r="1.500" fill="#1a1a1a" stroke="none" />
        </svg>
        <svg viewBox="0 0 20 16" className="ml-[10px] h-4 w-5" fill="none" stroke="#1a1a1a" strokeWidth="1.300">
          <path d="M1 5.500h3L8.500 1.500v13L4 10.500H1z" />
          <path d="M11 5.500a4 4 0 0 1 0 5M13.500 3a7.500 7.500 0 0 1 0 10" />
          <path d="M16 .8a11 11 0 0 1 0 14.400" stroke="#999" />
        </svg>
        <svg viewBox="0 0 20 14" className="ml-[11px] h-[14px] w-5">
          <rect x=".8" y="1" width="16" height="12" rx="2.500" fill="none" stroke="#1a1a1a" strokeWidth="1.500" />
          <rect x="3" y="3.200" width="9.500" height="7.600" fill="#1a1a1a" />
          <path d="M17.500 4.500h2v5h-2z" fill="#1a1a1a" />
        </svg>
        <div className="ml-[15px] w-[71px] pr-px pb-px text-right leading-[20px] tracking-[-0.4px]">
          <div>2:45 PM</div>
          <div>5/10/2023</div>
        </div>
        <span className="ml-[9px] flex h-5 w-5 items-center justify-center rounded-full bg-[#0078d4] text-[13px] text-white">3</span>
      </div>
    </div>
  );
}

export default function App() {
  return (
    <div className="relative flex h-[1080px] w-[1920px] flex-col overflow-hidden bg-[#f9fbfd] font-['Roboto',sans-serif]">
      <TabStrip />
      <AddressRow />
      <DocHeader />
      <Toolbar />
      <TopRuler />
      <div className="flex h-[757px] overflow-hidden">
        <SideRuler />
        <Outline />
        <DocumentPage />
        <div className="pt-[48px] pl-[4px]">
          <div className="h-[265px] w-[10px] rounded-full bg-[#dadce0]" />
        </div>
      </div>
      <div className="flex h-[18px] shrink-0 items-center pt-[2px] pl-[10px]">
        <div className="h-[10px] w-[1819px] rounded-full bg-[#dadce0]" />
      </div>
      <Taskbar />
      <div className="absolute top-[961px] right-0 flex h-[50px] w-[31px] items-center rounded-l-full bg-white pl-[6px] shadow-[0_1px_4px_rgba(0,0,0,0.35)]">
        <MdChevronLeft className="h-6 w-6 shrink-0 text-[#444746]" />
      </div>
    </div>
  );
}
